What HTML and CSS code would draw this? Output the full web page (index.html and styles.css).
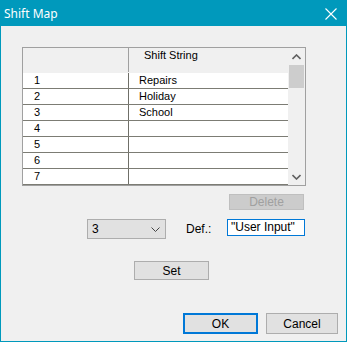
FILE: index.html
```html
<!DOCTYPE html>
<html lang="en">
<head>
    <meta charset="UTF-8">
    <title>Shift Map</title>
    <link rel="stylesheet" href="styles.css">
</head>
<body>
    <div class="window">
        <!-- Title bar -->
        <div class="titlebar">
            <span class="title">Shift Map</span>
            <svg class="close" width="12" height="12" viewBox="0 0 12 12">
                <path d="M0.5 0.5 L11.5 11.5 M11.5 0.5 L0.5 11.5" stroke="#fff" stroke-width="1.1" fill="none"/>
            </svg>
        </div>

        <div class="content">
            <!-- Shift grid -->
            <div class="grid">
                <div class="rows">
                    <div class="row header">
                        <div class="cell num"></div>
                        <div class="cell name">Shift String</div>
                    </div>
                    <div class="row"><div class="cell num">1</div><div class="cell name">Repairs</div></div>
                    <div class="row"><div class="cell num">2</div><div class="cell name">Holiday</div></div>
                    <div class="row"><div class="cell num">3</div><div class="cell name">School</div></div>
                    <div class="row"><div class="cell num">4</div><div class="cell name"></div></div>
                    <div class="row"><div class="cell num">5</div><div class="cell name"></div></div>
                    <div class="row"><div class="cell num">6</div><div class="cell name"></div></div>
                    <div class="row"><div class="cell num">7</div><div class="cell name"></div></div>
                </div>
                <div class="scrollbar">
                    <svg class="arrow" width="9" height="6" viewBox="0 0 9 6">
                        <path d="M0.5 5 L4.5 1 L8.5 5" stroke="#606060" stroke-width="1.6" fill="none"/>
                    </svg>
                    <div class="track"><div class="thumb"></div></div>
                    <svg class="arrow" width="9" height="6" viewBox="0 0 9 6">
                        <path d="M0.5 1 L4.5 5 L8.5 1" stroke="#606060" stroke-width="1.6" fill="none"/>
                    </svg>
                </div>
            </div>

            <div class="delete-row">
                <button class="btn disabled">Delete</button>
            </div>

            <div class="edit-row">
                <div class="combo">
                    <span>3</span>
                    <svg width="9" height="5" viewBox="0 0 9 5">
                        <path d="M0.5 0.5 L4.5 4.5 L8.5 0.5" stroke="#444" stroke-width="1" fill="none"/>
                    </svg>
                </div>
                <span class="label">Def.:</span>
                <div class="input">"User Input"</div>
            </div>

            <div class="set-row">
                <button class="btn set">Set</button>
            </div>

            <div class="footer">
                <button class="btn ok">OK</button>
                <button class="btn cancel">Cancel</button>
            </div>
        </div>
    </div>
</body>
</html>
```

FILE: styles.css
```css
/* General Styles */
body {
    margin: 0;
    padding: 0;
    font-family: 'Liberation Sans', Arial, sans-serif;
    font-size: 11px;
    color: #000;
}

.window {
    width: 347px;
    height: 342px;
    box-sizing: border-box;
    border: 1px solid #0099bc;
    border-top: none;
    background: #f0f0f0;
    display: flex;
    flex-direction: column;
}

.titlebar {
    height: 26px;
    margin: 0 -1px;
    background: #0099bc;
    display: flex;
    align-items: center;
    justify-content: space-between;
    padding: 0 10px 0 4px;
    box-sizing: border-box;
}

.title {
    font-family: 'Noto Sans', 'Open Sans', sans-serif;
    font-size: 12px;
    color: #fff;
    margin-top: 1px;
}

.close {
    margin-top: 1px;
}

.content {
    flex: 1;
    padding: 21px 0 0 21px;
}

/* Grid */
.grid {
    width: 284px;
    height: 139px;
    box-sizing: border-box;
    border: 1px solid #a0a0a0;
    display: flex;
    background: #fff;
}

.rows {
    width: 265px;
}

.row {
    display: flex;
    height: 16px;
    box-sizing: border-box;
    border-bottom: 1px solid #7c7c74;
}

.row.header {
    height: 25px;
    border-bottom: none;
    background: #f0f0f0;
}

.cell {
    line-height: 15px;
    white-space: nowrap;
}

.cell.num {
    width: 106px;
    padding-left: 11px;
    box-sizing: border-box;
    border-right: 1px solid #6f6f68;
}

.cell.name {
    padding-left: 10px;
}

.header .cell {
    line-height: 13px;
    padding-top: 1px;
}

.header .cell.num {
    border-right-color: #a0a0a0;
    height: 24px;
}

.header .cell.name {
    padding-left: 15px;
}

.scrollbar {
    width: 17px;
    background: #f0f0f0;
    display: flex;
    flex-direction: column;
    align-items: center;
}

.arrow {
    margin: 6px 0 5px;
}

.track {
    flex: 1;
    width: 100%;
}

.thumb {
    width: 15px;
    margin-left: 1px;
    height: 23px;
    background: #cdcdcd;
}

/* Buttons */
.btn {
    font-family: 'Liberation Sans', Arial, sans-serif;
    font-size: 11px;
    width: 75px;
    height: 18px;
    padding: 0;
    margin: 0;
    background: #e1e1e1;
    border: 1px solid #adadad;
    color: #000;
}

.btn.disabled {
    height: 16px;
    background: #cccccc;
    border-color: #bfbfbf;
    color: #a0a0a0;
    font-size: 12px;
}

.delete-row {
    width: 284px;
    display: flex;
    justify-content: flex-end;
    padding-top: 8px;
}

.delete-row .btn {
    margin-right: 2px;
}

.edit-row {
    display: flex;
    align-items: center;
    margin-top: 9px;
    padding-left: 65px;
    height: 20px;
}

.combo {
    width: 79px;
    height: 20px;
    box-sizing: border-box;
    background: #e1e1e1;
    border: 1px solid #adadad;
    display: flex;
    align-items: center;
    justify-content: space-between;
    padding: 0 5px 0 4px;
    font-size: 12px;
}

.label {
    margin-left: 20px;
    width: 41px;
    font-size: 12px;
}

.input {
    width: 78px;
    height: 17px;
    box-sizing: border-box;
    border: 1px solid #0078d7;
    background: #fff;
    padding-left: 3px;
    line-height: 15px;
    font-size: 12px;
    align-self: flex-start;
}

.set-row {
    margin-top: 22px;
    padding-left: 112px;
}

.btn.set {
    height: 19px;
    font-size: 12px;
}

.footer {
    display: flex;
    gap: 8px;
    margin-top: 33px;
    padding-left: 161px;
}

.btn.ok,
.btn.cancel {
    height: 21px;
    font-size: 12px;
}

.btn.ok {
    border: 2px solid #0078d7;
}

.btn.cancel {
    width: 72px;
}
```
